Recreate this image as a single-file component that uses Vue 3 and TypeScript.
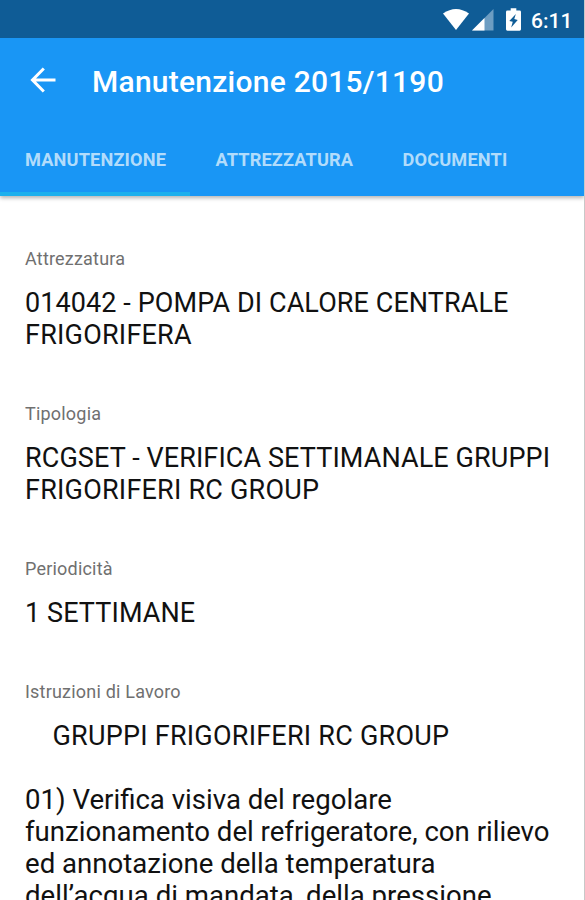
<script setup lang="ts">
interface Field { label: string; lines: string[] }
const tabs: string[] = ['MANUTENZIONE', 'ATTREZZATURA', 'DOCUMENTI']
const fields: Field[] = [
  { label: 'Attrezzatura', lines: ['014042 - POMPA DI CALORE CENTRALE', 'FRIGORIFERA'] },
  { label: 'Tipologia', lines: ['RCGSET - VERIFICA SETTIMANALE GRUPPI', 'FRIGORIFERI RC GROUP'] },
  { label: 'Periodicità', lines: ['1 SETTIMANE'] },
]
const instructions: string[] = [
  '01) Verifica visiva del regolare',
  'funzionamento del refrigeratore, con rilievo',
  'ed annotazione della temperatura',
  'dell’acqua di mandata, della pressione',
]
</script>

<template>
  <div class="screen">
    <header class="header">
      <div class="status">
        <svg class="wifi" viewBox="0 0 26 22"><path d="M0 4.500Q13-4.500 26 4.500L13 21z" fill="#fff" /></svg>
        <svg class="signal" viewBox="0 0 22 22"><path d="M21.500 0V21.500H0z" fill="#6d9dc2" /><path d="M12.500 9V21.500H0z" fill="#fff" /></svg>
        <svg class="battery" viewBox="0 0 16 24"><path d="M5 0h6v2.500h3.500q1.500 0 1.500 1.500v18.500q0 1.500-1.500 1.500h-13Q0 24 0 22.500V4q0-1.500 1.500-1.500H5z" fill="#fff" /><path d="M10.500 6 3.500 13.500 7.200 14.500 5.500 20.500 12.500 12.500 8.800 11.500z" fill="#0f5c96" /></svg>
        <span class="time">6:11</span>
      </div>
      <div class="toolbar">
        <svg class="back" viewBox="0 0 26 26"><path d="M25.500 13H3M13.800 1.500 2.500 13l11.300 11.500" fill="none" stroke="#fff" stroke-width="3" /></svg>
        <h1>Manutenzione 2015/1190</h1>
      </div>
      <nav class="tabs">
        <div v-for="(tab, i) in tabs" :key="tab" class="tab" :class="{ active: i === 0 }"><span>{{ tab }}</span></div>
      </nav>
    </header>
    <main>
      <section v-for="field in fields" :key="field.label">
        <h2><span>{{ field.label }}</span></h2>
        <p v-for="line in field.lines" :key="line"><span>{{ line }}</span></p>
      </section>
      <section>
        <h2><span>Istruzioni di Lavoro</span></h2>
        <p class="heading"><span>GRUPPI FRIGORIFERI RC GROUP</span></p>
        <p v-for="line in instructions" :key="line" class="instruction"><span>{{ line }}</span></p>
      </section>
    </main>
  </div>
</template>

<style>
body { margin: 0; overflow: hidden; }
</style>
<style scoped>
.screen { box-sizing: border-box; width: 585px; height: 900px; overflow: hidden; background: #fff; border-right: 1px solid #c8c8c8; font-family: Roboto, sans-serif; color: #111; }
.header { height: 196px; background: #1996f5; box-shadow: 0 2px 4px rgba(0, 0, 0, .3); }
.status { height: 38px; box-sizing: border-box; background: #0f5c96; display: flex; align-items: center; padding: 1px 0 0 443px; color: #fff; }
.wifi { width: 26px; height: 22px; }
.signal { width: 22px; height: 22px; margin-left: 3px; }
.battery { width: 15px; height: 23px; margin-left: 12px; }
.time { font-size: 21px; font-weight: 500; margin: 2px 0 0 10px; }
.toolbar { height: 86px; display: flex; align-items: center; color: #fff; }
.back { width: 26px; height: 26px; margin: 0 36px 3px 30px; }
h1 { margin: 0; font-size: 30px; font-weight: 500; letter-spacing: .24px; white-space: nowrap; }
.tabs { display: flex; height: 72px; font-size: 18.200px; font-weight: 700; color: #b2dcfb; }
.tab { box-sizing: border-box; padding: 0 24.300px 0 25px; line-height: 72px; white-space: nowrap; letter-spacing: .14px; }
.tab.active { border-bottom: 4px solid #1db0ed; }
main { padding: 52px 25px 0; }
section { margin-bottom: 52px; }
h2 { margin: 0 0 17px; height: 22px; line-height: 22px; font-size: 18px; font-weight: 400; letter-spacing: .2px; color: #707070; }
p { margin: 0; font-size: 27px; line-height: 32px; letter-spacing: .09px; white-space: nowrap; }
p + p { letter-spacing: .22px; }
.heading { padding-left: 27.500px; margin-bottom: 32px; letter-spacing: .23px; }
.instruction, p + .instruction { font-size: 27.600px; letter-spacing: normal; }
</style>
